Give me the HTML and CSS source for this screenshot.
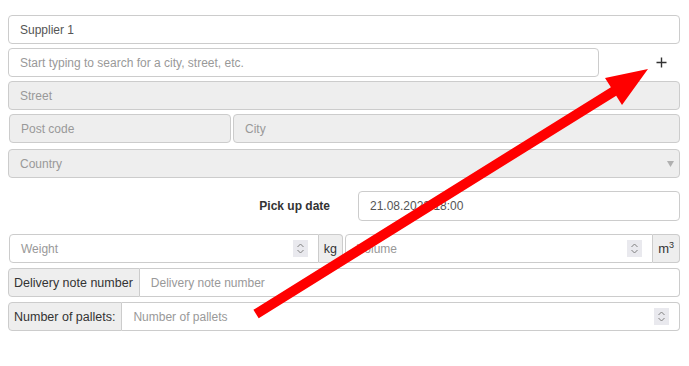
FILE: index.html
```html
<!DOCTYPE html>
<html lang="en">
<head>
    <meta charset="UTF-8">
    <title>Supplier</title>
    <link rel="stylesheet" href="styles.css">
</head>
<body>
<div class="form">
    <input class="field row" type="text" value="Supplier 1">

    <div class="row search-row">
        <input class="field" type="text" placeholder="Start typing to search for a city, street, etc.">
        <span class="add">
            <svg width="11" height="11" viewBox="0 0 11 11"><path d="M5.5 0.5v10M0.5 5.5h10" stroke="#333" stroke-width="1.4"/></svg>
        </span>
    </div>

    <input class="field row" type="text" placeholder="Street" disabled>

    <div class="row pair">
        <input class="field postcode" type="text" placeholder="Post code" disabled>
        <input class="field" type="text" placeholder="City" disabled>
    </div>

    <div class="row field select gap-6">
        <span>Country</span>
        <svg width="7" height="6" viewBox="0 0 7 6"><path d="M0 0h7L3.5 6z" fill="#b0b0b0"/></svg>
    </div>

    <div class="row date-row">
        <label>Pick up date</label>
        <input class="field" type="text" value="21.08.2023 18:00">
    </div>

    <div class="row measures">
        <div class="group weight">
            <div class="field num"><span>Weight</span><i class="spin"></i></div>
            <span class="addon">kg</span>
        </div>
        <div class="group volume">
            <div class="field num"><span>Volume</span><i class="spin"></i></div>
            <span class="addon unit">m<sup>3</sup></span>
        </div>
    </div>

    <div class="row group gap-5">
        <span class="addon first">Delivery note number</span>
        <input class="field" type="text" placeholder="Delivery note number">
    </div>

    <div class="row group gap-5">
        <span class="addon first">Number of pallets:</span>
        <div class="field num"><span>Number of pallets</span><i class="spin"></i></div>
    </div>
</div>

<!-- annotation arrow drawn over the form -->
<svg class="arrow" width="689" height="366" viewBox="0 0 689 366">
    <polygon fill="#ff0000" points="253.4,309.8 610.9,87.3 605,77.9 648,69 622,105.1 616.2,95.7 258.7,318.2"/>
</svg>
</body>
</html>
```
FILE: styles.css
```css
body{
    margin: 0;
    font-family: "Liberation Sans", Arial, sans-serif;
    font-size: 12px;
    color: #555;
    background: #fff;
}

.form{
    display: flex;
    flex-direction: column;
    padding: 15px 9px 0 8px;
}

.row{
    margin-top: 4px;
}
.row:first-child{
    margin-top: 0;
}
.gap-6{ margin-top: 6px; }
.gap-5{ margin-top: 5px; }

.field{
    box-sizing: border-box;
    height: 29px;
    width: 100%;
    padding: 0 11px;
    border: 1px solid #ccc;
    border-radius: 4px;
    background: #fff;
    font-family: inherit;
    font-size: 12px;
    color: #555;
    outline: none;
}
.field::placeholder{
    color: #999;
}
.field:disabled{
    background: #eee;
}
.field:disabled::placeholder{
    color: #999;
}

.search-row{
    display: flex;
    align-items: center;
}
.search-row .field{
    width: 591px;
    flex: none;
}
.add{
    flex: 1;
    display: flex;
    justify-content: flex-end;
    padding-right: 13px;
}
.add svg{
    display: block;
}

.pair{
    display: flex;
    gap: 2px;
}
.pair .postcode{
    width: 222px;
    flex: none;
    margin-left: 1px;
}

.select{
    display: flex;
    align-items: center;
    justify-content: space-between;
    background: #eee;
    color: #999;
    padding-right: 5px;
}

.date-row{
    display: flex;
    align-items: center;
    margin-top: 13px;
    height: 30px;
}
.date-row label{
    width: 322px;
    text-align: right;
    font-weight: bold;
    color: #333;
    flex: none;
}
.date-row .field{
    margin-left: 28px;
    height: 30px;
    width: 322px;
    flex: none;
}

.measures{
    display: flex;
    margin-top: 13px;
    gap: 2px;
}
.group{
    display: flex;
    height: 29px;
}
.weight{
    width: 334px;
    margin-left: 1px;
}
.volume{
    flex: 1;
}

.num{
    display: flex;
    align-items: center;
    justify-content: space-between;
    color: #999;
    padding-right: 10px;
}
.group .field{
    flex: 1;
    border-radius: 4px 0 0 4px;
}
.group .addon.first + .field{
    border-radius: 0 4px 4px 0;
    border-left: none;
}

.addon{
    box-sizing: border-box;
    display: flex;
    align-items: center;
    height: 29px;
    padding: 0 5px;
    border: 1px solid #ccc;
    border-left: none;
    border-radius: 0 4px 4px 0;
    background: #eee;
    color: #333;
    font-size: 12.5px;
    white-space: nowrap;
}
.addon.unit{
    font-size: 13px;
    padding: 0 5px 0 5px;
}
.addon sup{
    font-size: 9px;
    align-self: flex-start;
    margin-top: 5px;
}
.addon.first{
    border-left: 1px solid #ccc;
    border-radius: 4px 0 0 4px;
    padding: 0 6px 0 5px;
}

.spin{
    width: 15px;
    height: 17px;
    background: #e9e9ee url("data:image/svg+xml;utf8,<svg xmlns='http://www.w3.org/2000/svg' width='15' height='17'><path d='M4.5 7l3-3 3 3M4.5 10l3 3 3-3' fill='none' stroke='%23808080' stroke-width='1'/></svg>") no-repeat center;
    flex: none;
}

.arrow{
    position: absolute;
    left: 0;
    top: 0;
    pointer-events: none;
}
```
